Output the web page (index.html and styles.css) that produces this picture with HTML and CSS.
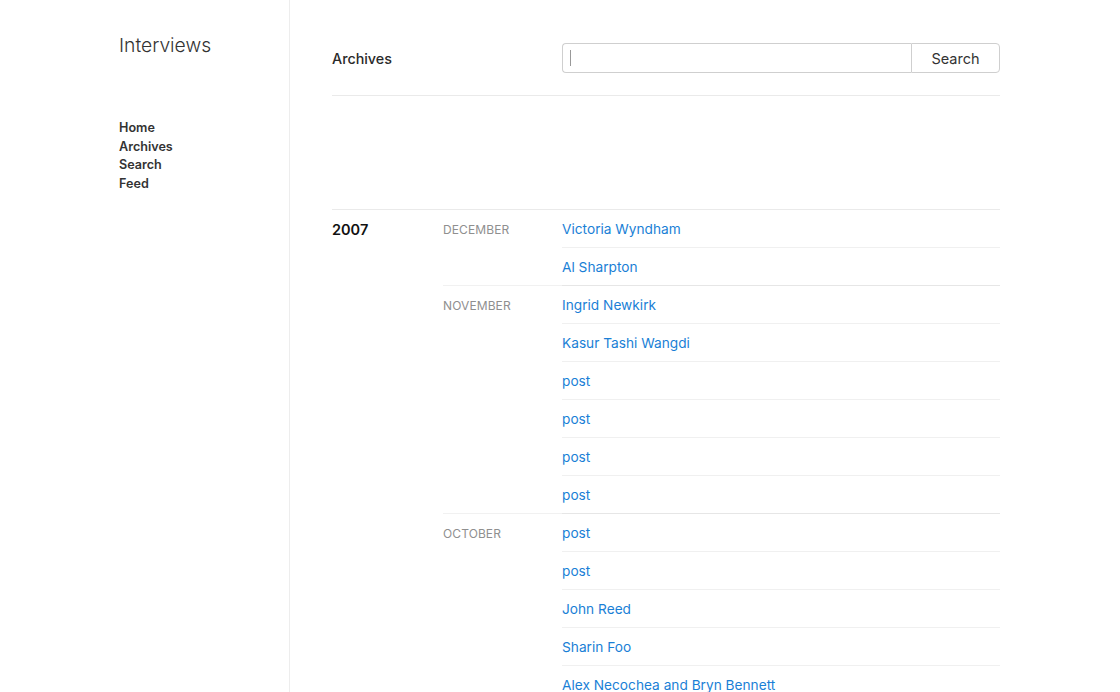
FILE: index.html
```html
<!DOCTYPE html>
<html lang="en">
<head>
<meta charset="utf-8">
<title>Archives — Interviews</title>
<link rel="stylesheet" href="styles.css">
</head>
<body>
<div class="page">
  <aside class="sidebar">
    <div class="site-title">Interviews</div>
    <nav class="nav">
      <a href="#">Home</a>
      <a href="#">Archives</a>
      <a href="#">Search</a>
      <a href="#">Feed</a>
    </nav>
  </aside>
  <main class="main">
    <header class="header">
      <h1 class="page-title">Archives</h1>
      <form class="search">
        <div class="search-field"><input class="search-input" type="text" aria-label="Search"><span class="caret"></span></div>
        <button class="search-button" type="button">Search</button>
      </form>
    </header>
    <div class="spacer"></div>
    <section class="year">
      <div class="year-label">2007</div>
      <div class="months">
        <div class="month">
          <div class="month-label">DECEMBER</div>
          <ul class="posts">
            <li><a href="#">Victoria Wyndham</a></li>
            <li><a href="#">Al Sharpton</a></li>
          </ul>
        </div>
        <div class="month">
          <div class="month-label">NOVEMBER</div>
          <ul class="posts">
            <li><a href="#">Ingrid Newkirk</a></li>
            <li><a href="#">Kasur Tashi Wangdi</a></li>
            <li><a href="#">post</a></li>
            <li><a href="#">post</a></li>
            <li><a href="#">post</a></li>
            <li><a href="#">post</a></li>
          </ul>
        </div>
        <div class="month">
          <div class="month-label">OCTOBER</div>
          <ul class="posts">
            <li><a href="#">post</a></li>
            <li><a href="#">post</a></li>
            <li><a href="#">John Reed</a></li>
            <li><a href="#">Sharin Foo</a></li>
            <li><a href="#">Alex Necochea and Bryn Bennett</a></li>
          </ul>
        </div>
      </div>
    </section>
  </main>
</div>
</body>
</html>
```

FILE: styles.css
```css
* { box-sizing: border-box; }
html, body { margin: 0; padding: 0; background: #fff; }
body {
  font-family: Inter, "Noto Sans", "Liberation Sans", sans-serif;
  color: #222;
  overflow: hidden;
  height: 692px;
}
.page {
  display: flex;
  min-height: 692px;
}
.sidebar {
  width: 290px;
  flex: 0 0 290px;
  border-right: 1px solid #ededed;
  padding: 33px 0 0 119px;
}
.site-title {
  font-size: 19.3px;
  font-weight: 300;
  color: #333;
  line-height: 24px;
}
.nav {
  display: flex;
  flex-direction: column;
  margin-top: 62px;
}
.nav a {
  font-size: 12.6px;
  font-weight: 600;
  color: #333;
  text-decoration: none;
  line-height: 18.7px;
}
.main {
  flex: 1;
  padding: 0 120px 0 42px;
}
.header {
  display: flex;
  align-items: center;
  justify-content: space-between;
  padding: 43px 0 22px;
  border-bottom: 1px solid #eaeaea;
}
.page-title {
  margin: 0;
  font-size: 14.3px;
  font-weight: 500;
  color: #2a2a2a;
}
.search {
  display: flex;
  width: 438px;
  height: 30px;
  margin: 0;
}
.search-field {
  position: relative;
  flex: 1;
}
.search-input {
  width: 100%;
  height: 30px;
  border: 1px solid #cfcfcf;
  border-right: none;
  border-radius: 4px 0 0 4px;
  padding: 0 8px;
  font: inherit;
  outline: none;
}
.caret {
  position: absolute;
  left: 8px;
  top: 7px;
  width: 1px;
  height: 16px;
  background: #999;
}
.search-button {
  width: 89px;
  height: 30px;
  border: 1px solid #cfcfcf;
  border-radius: 0 4px 4px 0;
  background: #fff;
  font-family: inherit;
  font-size: 14.5px;
  color: #333;
  padding: 0;
}
.spacer { height: 113px; }
.year {
  display: grid;
  grid-template-columns: 111px 1fr;
  border-top: 1px solid #eaeaea;
}
.year-label {
  font-size: 14.5px;
  font-weight: 600;
  color: #111;
  line-height: 22.8px;
  padding-top: 9px;
}
.month {
  display: grid;
  grid-template-columns: 119px 1fr;
}
.month + .month {
  border-top: 1px solid #f1f1f1;
}
.month + .month .posts {
  margin-top: -1px;
  border-top: 1px solid #e6e6e6;
}
.month-label {
  font-size: 12px;
  color: #8f8f8f;
  line-height: 22.8px;
  padding-top: 8.5px;
  letter-spacing: 0.1px;
}
.posts {
  list-style: none;
  margin: 0;
  padding: 0;
}
.posts li {
  padding: 7.9px 0 6.2px;
  line-height: 22.95px;
  font-size: 13.7px;
}
.posts li + li {
  border-top: 1px solid #f0f0f0;
}
.posts a {
  color: #1a7fd6;
  text-decoration: none;
}
```
